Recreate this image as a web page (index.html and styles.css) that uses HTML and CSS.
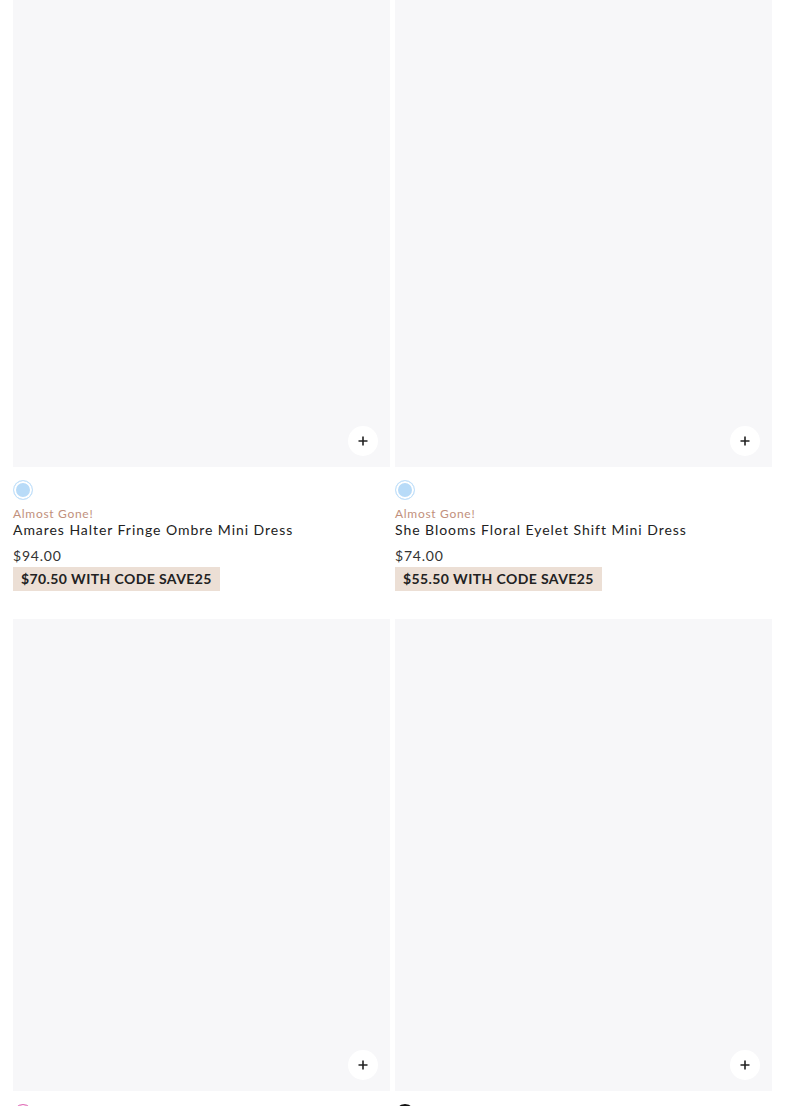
FILE: index.html
```html
<!DOCTYPE html>
<html lang="en">
<head>
  <meta charset="UTF-8">
  <meta name="viewport" content="width=device-width, initial-scale=1.0">
  <title>Dresses</title>
  <link rel="stylesheet" href="styles.css">
</head>
<body>

<div class="product-grid">

  <div class="product-card">
    <div class="product-image">
      <button class="quick-add" aria-label="Quick add">
        <svg width="10" height="10" viewBox="0 0 10 10"><path d="M5 0.5v9M0.5 5h9" stroke="#222" stroke-width="1.6"/></svg>
      </button>
    </div>
    <div class="swatches">
      <span class="swatch swatch-blue"></span>
    </div>
    <p class="badge">Almost Gone!</p>
    <h3 class="product-title">Amares Halter Fringe Ombre Mini Dress</h3>
    <p class="price">$94.00</p>
    <span class="promo">$70.50 WITH CODE SAVE25</span>
  </div>

  <div class="product-card">
    <div class="product-image">
      <button class="quick-add" aria-label="Quick add">
        <svg width="10" height="10" viewBox="0 0 10 10"><path d="M5 0.5v9M0.5 5h9" stroke="#222" stroke-width="1.6"/></svg>
      </button>
    </div>
    <div class="swatches">
      <span class="swatch swatch-blue"></span>
    </div>
    <p class="badge">Almost Gone!</p>
    <h3 class="product-title">She Blooms Floral Eyelet Shift Mini Dress</h3>
    <p class="price">$74.00</p>
    <span class="promo">$55.50 WITH CODE SAVE25</span>
  </div>

  <div class="product-card">
    <div class="product-image">
      <button class="quick-add" aria-label="Quick add">
        <svg width="10" height="10" viewBox="0 0 10 10"><path d="M5 0.5v9M0.5 5h9" stroke="#222" stroke-width="1.6"/></svg>
      </button>
    </div>
    <div class="swatches">
      <span class="swatch swatch-pink"></span>
    </div>
    <p class="badge">Almost Gone!</p>
    <h3 class="product-title">Sweet Talk Ruffle Mini Dress</h3>
    <p class="price">$68.00</p>
    <span class="promo">$51.00 WITH CODE SAVE25</span>
  </div>

  <div class="product-card">
    <div class="product-image">
      <button class="quick-add" aria-label="Quick add">
        <svg width="10" height="10" viewBox="0 0 10 10"><path d="M5 0.5v9M0.5 5h9" stroke="#222" stroke-width="1.6"/></svg>
      </button>
    </div>
    <div class="swatches">
      <span class="swatch swatch-black"></span>
    </div>
    <p class="badge">Almost Gone!</p>
    <h3 class="product-title">Night Out Satin Slip Mini Dress</h3>
    <p class="price">$72.00</p>
    <span class="promo">$54.00 WITH CODE SAVE25</span>
  </div>

</div>

</body>
</html>
```

FILE: styles.css
```css
body {
  margin: 0;
  font-family: Lato, "Open Sans", Arial, sans-serif;
  background-color: #fff;
  color: #222;
}

.product-grid {
  display: grid;
  grid-template-columns: 1fr 1fr;
  column-gap: 5px;
  row-gap: 28px;
  padding: 0 13px;
  margin-top: -4px;
}

.product-card {
  display: flex;
  flex-direction: column;
  align-items: flex-start;
}

.product-image {
  position: relative;
  width: 100%;
  aspect-ratio: 4 / 5;
  background-color: #f7f7f9;
}

.quick-add {
  position: absolute;
  right: 12px;
  bottom: 11px;
  width: 30px;
  height: 30px;
  border: none;
  border-radius: 50%;
  background-color: #fff;
  display: flex;
  align-items: center;
  justify-content: center;
  padding: 0;
  cursor: pointer;
}

.swatches {
  display: flex;
  gap: 6px;
  margin-top: 13px;
}

.swatch {
  width: 20px;
  height: 20px;
  border-radius: 50%;
  box-sizing: border-box;
  border: 1px solid #c3e1fa;
  box-shadow: inset 0 0 0 2px #fff;
}

.swatch-blue {
  background-color: #b8dbf8;
}

.swatch-pink {
  border-color: #e070b8;
  background-color: #f29ad2;
}

.swatch-black {
  border: 2px solid #111;
  background-color: #111;
}

.badge {
  margin: 6px 0 0;
  font-size: 12px;
  line-height: 15px;
  letter-spacing: 0.7px;
  color: #c1907c;
}

.product-title {
  margin: 0;
  font-size: 14px;
  font-weight: 400;
  line-height: 18px;
  letter-spacing: 0.95px;
  color: #222;
}

.price {
  margin: 8px 0 0;
  font-size: 14px;
  line-height: 18px;
  letter-spacing: 0.8px;
  color: #333;
}

.promo {
  margin-top: 2px;
  padding: 0 8px;
  font-size: 14px;
  font-weight: 700;
  line-height: 24px;
  letter-spacing: 0.4px;
  background-color: #ecdfd5;
  color: #222;
}
```
